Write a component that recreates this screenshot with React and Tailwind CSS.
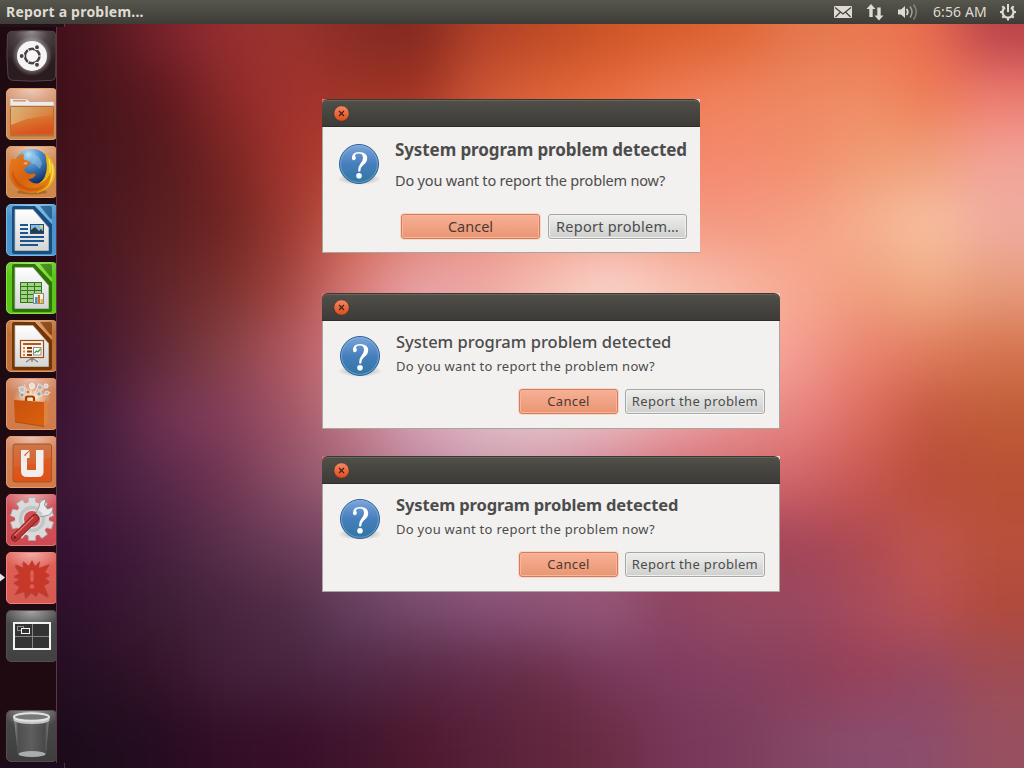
import React from "react";

const WALL = [
  "3a0c18 4e161e 7a222c 962e30 9a342c 882c26 82281f b04028 bc4824 cc5426 d85c2c de6434 e4764c e8784e ea6c50 b84248",
  "3a0c18 48141c 5c181e 8a2828 a2322e a03426 a03222 cc5634 de6436 ea6c3e f07c54 f0845e ee8862 f08c66 ee7c54 ee7c70",
  "3c1018 48161e 541a1e 762422 a2342c b84034 cc5040 de6448 e86c50 f07a5a f4866a f48a70 f28e6c f09c74 f0a07c f2a498",
  "3c1020 4a1820 5a1e20 6e2422 9a3830 d0604c e08070 ea9080 f09c88 f4a090 f49a84 f49880 f5a084 f6b090 f8c2a2 f0aca0",
  "3a1022 481826 60242a 7a302c a44440 d87c78 e8a4a8 eea8a4 f6c0b6 fad8ce f8c6b8 f8b8a4 f7a890 f0a07e f0ac84 e89c7c",
  "38102a 44182e 622a38 844044 b05860 d88084 e49ca0 eca8a8 f4b8b0 f6c0b4 f6bcb0 f8b4a8 f49c90 ea8470 e07c5c d47450",
  "361030 441a3a 703250 843e5c a05464 c47c88 d8a4b8 e0bcc8 e6c8ce ecbcc2 f0a8a8 ea9090 e88480 dc6c60 c45840 c05c38",
  "361230 441c3c 58284a 703450 8c5068 a4687c b88098 c894a8 cc90a0 cc8090 cc6c78 d06c70 d06468 c85650 b84c38 b85034",
  "30102e 3c1436 46203e 5a304c 6c3c58 7a4864 905c7c 9c6480 a05c78 a04c64 9c4458 a04456 a44458 ac4a50 c0564e b8503c",
  "280e28 341230 3a1e34 48243e 502c44 644060 784a6c 845078 8c5478 96587a 8c4464 964a62 984860 a84c5c b85054 b04a3c",
  "200c20 2a1024 341428 44203a 48243e 502846 582844 602c48 6a2e48 78385a 803c5e 844060 8c3e5a 984058 944860 a04c54",
  "1a0a1a 1e0c1c 260c20 320e26 380e28 40142c 4c182e 58203a 60263c 6a2c44 783658 7c3c5c 844664 8a4c6c 8c4c6c 98505f",
].map((r) => r.split(" "));

function Wallpaper() {
  const cells = [];
  for (let r = -2; r < 14; r++) {
    for (let c = -2; c < 18; c++) {
      const row = WALL[Math.min(11, Math.max(0, r))];
      const fill = "#" + row[Math.min(15, Math.max(0, c))];
      cells.push(<rect key={r + "_" + c} x={c * 64} y={r * 64} width="65" height="65" fill={fill} />);
    }
  }
  return (
    <svg className="absolute inset-0 h-full w-full" viewBox="0 0 1024 768">
      <defs>
        <filter id="soft" filterUnits="userSpaceOnUse" x="-128" y="-128" width="1280" height="1024" colorInterpolationFilters="sRGB">
          <feGaussianBlur stdDeviation="27" />
        </filter>
      </defs>
      <g filter="url(#soft)">{cells}</g>
    </svg>
  );
}

function Tile({ id, top, bottom, edge, children }) {
  return (
    <svg className="block h-[52px] w-[50px] shrink-0" viewBox="0 0 50 52">
      <defs>
        <linearGradient id={id} x1="0" y1="0" x2="0" y2="1">
          <stop offset="0" stopColor={top} />
          <stop offset="1" stopColor={bottom} />
        </linearGradient>
        <radialGradient id={id + "g"} cx="0.5" cy="0" r="0.6">
          <stop offset="0" stopColor="#fff" stopOpacity="0.5" />
          <stop offset="1" stopColor="#fff" stopOpacity="0" />
        </radialGradient>
      </defs>
      <rect x="0.5" y="0.5" width="50.5" height="51" rx="4.5" fill={`url(#${id})`} stroke={edge} />
      <rect x="1" y="1" width="49" height="30" rx="4" fill={`url(#${id}g)`} />
      {children}
    </svg>
  );
}

function DashIcon() {
  return (
    <svg className="block h-[52px] w-[50px] shrink-0" viewBox="0 0 50 52">
      <defs>
        <radialGradient id="dash" cx="0.5" cy="0.02" r="0.75">
          <stop offset="0" stopColor="#938c8e" />
          <stop offset="0.45" stopColor="#4b4143" />
          <stop offset="1" stopColor="#2b1c20" />
        </radialGradient>
        <radialGradient id="dashglow">
          <stop offset="0.55" stopColor="#fff" stopOpacity="0.5" />
          <stop offset="1" stopColor="#fff" stopOpacity="0" />
        </radialGradient>
      </defs>
      <path d="M5 1.5Q26 -0.5 47 1.5Q49.5 2 49.5 5Q50.5 26 49.5 46Q49 50 46 50.3Q26 52 6 50.3Q2.500 50 2 46Q0 26 1.500 5Q2 2 5 1.500Z" fill="url(#dash)" stroke="#514447" />
      <circle cx="26" cy="26" r="20" fill="url(#dashglow)" />
      <circle cx="26" cy="26" r="15" fill="#f6f4f4" />
      <circle cx="26.200" cy="26" r="7.300" fill="none" stroke="#4a3f41" strokeWidth="2.500" />
      <g fill="#4a3f41" stroke="#f6f4f4" strokeWidth="1.100">
        <circle cx="15.700" cy="26" r="2.500" />
        <circle cx="31" cy="17.200" r="2.500" />
        <circle cx="31" cy="34.800" r="2.500" />
      </g>
      <g stroke="#f6f4f4" strokeWidth="1">
        <path d="M32 26h4M23.500 22l-3-5M23.500 30l-3 5" />
      </g>
    </svg>
  );
}

function FilesIcon() {
  return (
    <Tile id="files" top="#d99877" bottom="#cf8a4c" edge="#e2a06a">
      <defs>
        <linearGradient id="fold" x1="0" y1="0" x2="0.35" y2="1">
          <stop offset="0" stopColor="#c9925a" />
          <stop offset="0.5" stopColor="#d97a34" />
          <stop offset="1" stopColor="#d9541c" />
        </linearGradient>
        <linearGradient id="foldgloss" x1="0" y1="0" x2="1" y2="0">
          <stop offset="0" stopColor="#e3cc90" stopOpacity="0.6" />
          <stop offset="1" stopColor="#e3a870" stopOpacity="0.15" />
        </linearGradient>
      </defs>
      <path d="M4 18V10.500H20L24 13.500H48V18Z" fill="#eeebe8" stroke="#b9a79a" strokeWidth="0.800" />
      <path d="M7 12.700h13" stroke="#d99a72" strokeWidth="1.800" />
      <rect x="4.500" y="18.500" width="43" height="28" rx="1" fill="url(#fold)" stroke="#b96a35" />
      <path d="M5 19h42v8Q22 29 5 37Z" fill="url(#foldgloss)" />
      <path d="M4 47.800h44" stroke="#8f4a20" strokeWidth="1" opacity="0.6" />
    </Tile>
  );
}

function FirefoxIcon() {
  return (
    <Tile id="ffx" top="#d59161" bottom="#cd8646" edge="#e2a064">
      <defs>
        <radialGradient id="globe" cx="0.4" cy="0.15" r="0.8">
          <stop offset="0" stopColor="#b9e2f4" />
          <stop offset="0.4" stopColor="#4c91cc" />
          <stop offset="1" stopColor="#12306e" />
        </radialGradient>
        <linearGradient id="foxy" x1="0" y1="0" x2="1" y2="1">
          <stop offset="0" stopColor="#e77d1e" />
          <stop offset="0.5" stopColor="#d9620f" />
          <stop offset="1" stopColor="#e98a12" />
        </linearGradient>
      </defs>
      <ellipse cx="26" cy="46" rx="15" ry="2.500" fill="#7a4010" opacity="0.45" />
      <circle cx="26" cy="21" r="18" fill="url(#globe)" />
      <path d="M27 8l6 3 3 6 -2 6 -4 -4 -5 -2 2 -4z" fill="#a6d2ec" opacity="0.4" />
      <path d="M39 7Q49 14 49 28Q47 43 31 47L27 40Q38 37 40 27Q42 20 39 7Z" fill="#e9b913" />
      <path d="M43 13Q46 24 42 33M46 18Q49 29 43 37" stroke="#f8e36a" strokeWidth="1.200" fill="none" />
      <path d="M6 12Q8 14 10 13Q13 9 18 8Q17 11 18 14Q22 14 25 17Q23 20 20 20.500L18 24Q20 27 24 28Q28 27 30 28.500Q27 33 22 33Q27 39 35 37Q42 34 44 26Q46 37 38 43Q29 49 18 46Q7 42 3.500 31Q2 21 6 12Z" fill="url(#foxy)" />
      <path d="M7 24Q9 36 20 41Q31 44 40 38Q34 47 22 45Q8 41 6 28Z" fill="#b5440b" opacity="0.45" />
      <path d="M17 17l5 -1 -2 3z" fill="#fff" opacity="0.5" />
    </Tile>
  );
}

function DocTile({ id, light, mid, dark, children }) {
  return (
    <Tile id={id} top={mid} bottom={mid} edge={light}>
      <defs>
        <linearGradient id={id + "p"} x1="0" y1="0" x2="0" y2="1">
          <stop offset="0" stopColor="#ffffff" />
          <stop offset="1" stopColor="#d5d5d5" />
        </linearGradient>
      </defs>
      <path d="M8 2H29L46 20V48a2 2 0 0 1 -2 2H8a2 2 0 0 1 -2 -2V4a2 2 0 0 1 2 -2Z" fill={dark} />
      <path d="M34 2H44a2 2 0 0 1 2 2V14.500Q44 14.500 43 13Z" fill={dark} opacity="0.7" />
      <path d="M29 2H32L46 17V20Z" fill={light} opacity="0.8" />
      <path d="M9 5.500H27L42.500 23.500V46.500H9Z" fill={`url(#${id}p)`} stroke="#b9bcbb" strokeWidth="0.800" />
      {children}
    </Tile>
  );
}

function WriterIcon() {
  return (
    <DocTile id="wri" light="#79b8e6" mid="#4a94cd" dark="#174e7e">
      <path d="M14 21h8M14 25h8M14 29h8M14 33h24M14 37h24M14 41h18" stroke="#1b568c" strokeWidth="2" />
      <rect x="24.500" y="20.500" width="13" height="9" fill="#83bde6" stroke="#1c4f7c" />
      <path d="M25 29v-3l4 -3 4 4 2 -2 2.500 3V29Z" fill="#2c3b42" />
      <circle cx="35.500" cy="22.500" r="1.500" fill="#ecd24b" />
    </DocTile>
  );
}

function CalcIcon() {
  return (
    <DocTile id="cal" light="#8be03e" mid="#5cc51b" dark="#2e7404">
      <rect x="14" y="20" width="22" height="21" fill="#2f7d0d" />
      <g fill="#a5cf8f">
        {[21, 25, 29, 33, 37].map((y) =>
          [15, 22, 29].map((x) => <rect key={x + "-" + y} x={x} y={y} width="6" height="3" />)
        )}
      </g>
      <rect x="27.500" y="31.500" width="10" height="10" fill="#f2f2f2" stroke="#8b8b8b" />
      <path d="M29 41v-6h2.500v6z" fill="#3b93d4" />
      <path d="M31.800 41v-8h2.200v8z" fill="#e06b16" />
      <path d="M34.500 41v-4h2.500v4z" fill="#e8be1b" />
    </DocTile>
  );
}

function ImpressIcon() {
  return (
    <DocTile id="imp" light="#df9a63" mid="#be7038" dark="#743503">
      <path d="M26 38v4M26 38l-6 4M26 38l6 4" stroke="#858585" strokeWidth="1.500" />
      <rect x="14.500" y="20.500" width="23" height="17" fill="#f8f3ef" stroke="#9a4c10" strokeWidth="1.200" />
      <path d="M17 24h18" stroke="#b35a18" strokeWidth="2" />
      <path d="M17 28h2M17 31.500h2M17 35h2" stroke="#d88242" strokeWidth="2" />
      <path d="M21 28h5M21 31.500h5M21 35h5" stroke="#8a3c04" strokeWidth="2" />
      <rect x="27.500" y="27.500" width="7.500" height="7.500" fill="#fff" stroke="#8b8b8b" />
      <path d="M28.500 33l2 -2 1.500 1 2.500 -3" stroke="#3a9a20" strokeWidth="1.200" fill="none" />
    </DocTile>
  );
}

function SoftwareIcon() {
  return (
    <Tile id="sft" top="#d0835f" bottom="#d07a47" edge="#e39a6a">
      <defs>
        <linearGradient id="bag" x1="0" y1="0" x2="1" y2="1">
          <stop offset="0" stopColor="#c9500f" />
          <stop offset="1" stopColor="#d8620c" />
        </linearGradient>
        <radialGradient id="bagglow">
          <stop offset="0" stopColor="#fff3d5" />
          <stop offset="1" stopColor="#fff3d5" stopOpacity="0" />
        </radialGradient>
      </defs>
      <ellipse cx="26" cy="20" rx="19" ry="12" fill="url(#bagglow)" />
      <path d="M24 20L12 9M24 20L18 6M25 20V7M27 20L33 5M28 20L40 8M29 20L45 14" stroke="#fff" strokeWidth="1" opacity="0.5" />
      <g stroke="#fff" strokeWidth="0.600">
        <circle cx="16" cy="11.500" r="3" fill="#b9c4d0" />
        <circle cx="26" cy="8" r="2.700" fill="#e9dfda" />
        <circle cx="34" cy="9.500" r="2.700" fill="#b6b2b8" />
        <circle cx="40" cy="8" r="2.200" fill="#d8d0cc" />
        <circle cx="41" cy="15" r="2" fill="#aebbc9" />
        <circle cx="16" cy="17" r="2" fill="#6f9bb4" />
        <circle cx="22" cy="14" r="2" fill="#d8743c" />
        <circle cx="33" cy="16" r="2.200" fill="#92a2b5" />
      </g>
      <path d="M8 22L38 24V48.500L9 44Z" fill="url(#bag)" />
      <path d="M38 24L41 21 43 44 38 48.500Z" fill="#dd8240" />
      <path d="M20 23V20Q20 18.500 22 18.500H26Q28 18.500 28 20V23" stroke="#a53c00" strokeWidth="2.200" fill="none" />
      <path d="M9 44L38 48.500" stroke="#9c3c05" strokeWidth="1" opacity="0.6" />
    </Tile>
  );
}

function UbuntuOneIcon() {
  return (
    <Tile id="uone" top="#d98865" bottom="#d07b48" edge="#e59c70">
      <defs>
        <linearGradient id="uin" x1="0" y1="0" x2="0" y2="1">
          <stop offset="0" stopColor="#cd7648" />
          <stop offset="1" stopColor="#e0531a" />
        </linearGradient>
      </defs>
      <rect x="7" y="8" width="38.500" height="38" rx="2" fill="url(#uin)" stroke="#a85427" />
      <path d="M7.500 31Q28 30 45 21V45H7.500Z" fill="#e04e10" opacity="0.45" />
      <path d="M15 14H23V20L21 19.500V34H30V14H37.500V36Q37.500 41 32 41H21Q15 41 15 35Z" fill="#f2eeec" />
      <path d="M18.500 18.500L23 14.500V20H18.500Z" fill="#d9642c" />
      <path d="M19.500 19.500L23.500 15V22H21Z" fill="#f2eeec" />
    </Tile>
  );
}

function SettingsIcon() {
  const teeth = [0, 36, 72, 108, 144, 180, 216, 252, 288, 324];
  return (
    <Tile id="set" top="#d0565c" bottom="#cf4a52" edge="#e07a7e">
      <g fill="#dadada" stroke="#a9a9a9" strokeWidth="0.700">
        {teeth.map((a) => (
          <path key={a} d="M22 11L22.500 3.500H29.500L30 11Z" transform={`rotate(${a} 26 25)`} />
        ))}
        <circle cx="26" cy="25" r="17" stroke="none" />
      </g>
      <circle cx="26" cy="25" r="11.500" fill="none" stroke="#c4c4c4" strokeWidth="3.500" />
      <circle cx="26" cy="25" r="8" fill="#cf4f55" />
      <path d="M33 13Q33 6 40 5L38.500 11L41.500 15L47 13Q47 21 39 22L34 22.500L30 19Z" fill="#eaeaea" stroke="#8f8f8f" strokeWidth="0.900" />
      <path d="M35 18L28.500 25" stroke="#c9c9c9" strokeWidth="5" />
      <path d="M29 24L9 43.500" stroke="#82201f" strokeWidth="8" strokeLinecap="round" />
      <path d="M29 24L9 43.500" stroke="#bb3636" strokeWidth="6" strokeLinecap="round" />
      <path d="M27 23.500L9 41" stroke="#dc7470" strokeWidth="1.300" strokeLinecap="round" />
      <circle cx="9" cy="43.500" r="1.500" fill="#6e2020" />
    </Tile>
  );
}

function CrashIcon() {
  const burst =
    "M9 12L18 16L17 9L23 14L26 8L29 14L34 9L33 16L44 12L39 20L44 23L39 26L44 30L38 33L43 45L33 39L31 44L26 40L20 46L19 39L9 42L14 34L8 30L15 27L8 24L14 21Z";
  return (
    <Tile id="crs" top="#e06056" bottom="#d65a50" edge="#ec8278">
      <path d={burst} fill="#9c3a34" opacity="0.7" transform="translate(-0.8 1.200)" />
      <path d={burst} fill="#c83829" />
      <rect x="24" y="18" width="4" height="12" rx="1.200" fill="#df5f52" stroke="#b23125" strokeWidth="0.500" />
      <circle cx="26" cy="34.500" r="2.200" fill="#df5f52" />
    </Tile>
  );
}

function WorkspaceIcon() {
  return (
    <Tile id="wsp" top="#4c4c4c" bottom="#414141" edge="#505050">
      <rect x="8" y="13" width="36" height="26" fill="#333" stroke="#f2f2f2" strokeWidth="2" />
      <path d="M26.500 14v24M9 26.500h34" stroke="#868686" strokeWidth="1" />
      <rect x="11.500" y="16.500" width="6" height="4" fill="none" stroke="#8e8e8e" />
      <rect x="15.500" y="18.500" width="8" height="5" fill="#333" stroke="#f5f5f5" />
    </Tile>
  );
}

function TrashIcon() {
  return (
    <Tile id="trs" top="#4a4a4a" bottom="#3e3e3e" edge="#505050">
      <defs>
        <linearGradient id="can" x1="0" y1="0" x2="1" y2="0">
          <stop offset="0" stopColor="#a5a5a5" />
          <stop offset="0.12" stopColor="#505050" />
          <stop offset="0.5" stopColor="#636363" />
          <stop offset="0.88" stopColor="#4a4a4a" />
          <stop offset="1" stopColor="#8a8a8a" />
        </linearGradient>
      </defs>
      <path d="M8 9H43L40 45Q26 49.500 12 45Z" fill="url(#can)" opacity="0.85" />
      <ellipse cx="26" cy="44" rx="13.500" ry="3" fill="#a9adab" />
      <path d="M7.500 7V10.500Q12 14 26 14T43.500 10.500V7Z" fill="#c6c6c6" />
      <ellipse cx="25.500" cy="7" rx="17.500" ry="3.800" fill="#787878" stroke="#e2e2e2" strokeWidth="2" />
    </Tile>
  );
}

function Launcher() {
  return (
    <aside className="relative flex w-[65px] shrink-0 flex-col">
      <div className="h-[3px] border-r border-[#6b3540] bg-[#24101a]" />
      <div className="flex min-h-0 w-[57px] flex-1 flex-col gap-1.5 border-r border-[#5d3643] bg-[#200a11] pt-[3px] pl-1.5">
        <DashIcon />
        <FilesIcon />
        <FirefoxIcon />
        <WriterIcon />
        <CalcIcon />
        <ImpressIcon />
        <SoftwareIcon />
        <UbuntuOneIcon />
        <SettingsIcon />
        <CrashIcon />
        <WorkspaceIcon />
        <div className="mt-auto pb-[1px]">
          <TrashIcon />
        </div>
      </div>
      <div className="h-[5px] border-r border-[#4a3048] bg-[#1c0a1e]" />
      <svg className="absolute top-[549px] left-0 h-[9px] w-[5px]" viewBox="0 0 5 9">
        <path d="M0 0.500L5 4.500L0 8.500Z" fill="#e4e2e3" />
      </svg>
    </aside>
  );
}

function TopBar() {
  return (
    <header className="relative flex h-6 shrink-0 items-center bg-linear-to-b from-[#57564d] to-[#3d3c37] text-[#dfdbd2]">
      <h1 className="pl-1.5 text-[14px] leading-6 font-bold tracking-[0.22px] whitespace-nowrap">Report a problem...</h1>
      <div className="ml-auto flex items-center pr-[7px]">
        <svg className="h-6 w-5" viewBox="0 0 20 24">
          <rect x="1" y="6" width="18" height="12" rx="1" fill="#dfdbd2" />
          <path d="M2 7.500L10 14L18 7.500M2.500 17L7.500 12M17.500 17L12.500 12" stroke="#45443e" strokeWidth="1.300" fill="none" />
        </svg>
        <svg className="ml-3 h-6 w-5" viewBox="0 0 20 24">
          <path d="M6 4L10.500 9H7.700V17H4.300V9H1.500ZM14 20.500L9.500 15.500H12.300V7.500H15.700V15.500H18.500Z" fill="#dfdbd2" />
        </svg>
        <svg className="ml-3 h-6 w-5" viewBox="0 0 20 24">
          <path d="M1 9.500H4L8 6V18L4 14.500H1Z" fill="#dfdbd2" />
          <path d="M9.500 9Q12 12 9.500 15" stroke="#dfdbd2" strokeWidth="1.800" fill="none" />
          <path d="M13 6.500Q17 12 13 17.500" stroke="#a19f96" strokeWidth="1.500" fill="none" />
          <path d="M16.500 4.500Q22 12 16.500 19.500" stroke="#84827a" strokeWidth="1.500" fill="none" />
        </svg>
        <span className="ml-4 w-[54px] text-[14px] leading-6 tracking-[0.1px] whitespace-nowrap">6:56 AM</span>
        <svg className="ml-3 h-6 w-[18px]" viewBox="0 0 18 24">
          <path d="M6 7.500A5.500 5.500 0 1 0 12 7.500" stroke="#dfdbd2" strokeWidth="2.200" fill="none" />
          <path d="M9 4v8" stroke="#dfdbd2" strokeWidth="2" />
          <path d="M1 12h3M14 12h3M9 17v3.500M3.300 17.700l2 -2M14.700 17.700l-2 -2M3.300 6.300l2 2M14.700 6.300l-2 2" stroke="#dfdbd2" strokeWidth="2" />
        </svg>
      </div>
    </header>
  );
}

function QuestionIcon() {
  return (
    <svg className="block h-12 w-12 shrink-0" viewBox="0 0 48 48">
      <defs>
        <linearGradient id="q" x1="0" y1="0" x2="0" y2="1">
          <stop offset="0" stopColor="#7da5dc" />
          <stop offset="0.5" stopColor="#467fbb" />
          <stop offset="1" stopColor="#2f76a4" />
        </linearGradient>
        <radialGradient id="qs">
          <stop offset="0.4" stopColor="#000" stopOpacity="0.22" />
          <stop offset="1" stopColor="#000" stopOpacity="0" />
        </radialGradient>
      </defs>
      <ellipse cx="24" cy="39" rx="22" ry="6" fill="url(#qs)" />
      <circle cx="24" cy="24" r="19.500" fill="url(#q)" stroke="#2b6396" />
      <circle cx="24" cy="24" r="18.400" fill="none" stroke="#8fb6e2" strokeWidth="0.900" opacity="0.65" />
      <path d="M17 18.800Q16.500 12 24 12Q32.200 12 32.200 18.500Q32.200 22.300 28 25.300Q25.300 27.500 25.200 31.500H23.100Q22.800 27 25.300 23.800Q28 20.800 28 18Q28 13.600 23.800 13.600Q20.300 13.600 20 16Q21 17 20.800 18.300Q20.300 20.400 18.700 20.300Q17.200 20.200 17 18.800Z" fill="#fff" />
      <circle cx="24" cy="35.700" r="2.800" fill="#fff" />
    </svg>
  );
}

function Button({ primary, className, children }) {
  const tone = primary
    ? "border-[#d27c5c] bg-linear-to-b from-[#f7b095] to-[#e99672] text-[#4b3a33] shadow-[0_0_0_1px_#f6d8cb,inset_0_0_0_1px_#f8b59b]"
    : "border-[#a6a6a5] bg-linear-to-b from-[#eeeeed] to-[#cfcfce] text-[#4c4c4c] shadow-[0_1px_0_#fafafa,inset_0_0_0_1px_#f0f0ef]";
  return (
    <button className={`flex items-center justify-center rounded-[3px] border whitespace-nowrap ${tone} ${className}`}>
      {children}
    </button>
  );
}

function Dialog({ className, children }) {
  return (
    <section className={`absolute flex flex-col bg-linear-to-r from-[#d9696c] to-[#f8cfc8] ${className}`}>
      <div className="flex h-7 shrink-0 items-center rounded-t-[6px] border-t border-b border-t-[#3a3934] border-b-[#2e2d2a] bg-linear-to-b from-[#504f48] to-[#3c3b37] pl-[11px] shadow-[inset_0_1px_0_#66655c]">
        <svg className="h-[17px] w-[17px]" viewBox="0 0 17 17">
          <defs>
            <linearGradient id="cls" x1="0" y1="0" x2="0" y2="1">
              <stop offset="0" stopColor="#f58a65" />
              <stop offset="1" stopColor="#df4a17" />
            </linearGradient>
          </defs>
          <circle cx="8.500" cy="8.500" r="7.700" fill="url(#cls)" stroke="#33322e" strokeWidth="0.600" />
          <path d="M6 6L11 11M11 6L6 11" stroke="#3c2018" strokeWidth="1.100" />
        </svg>
      </div>
      <div className="flex flex-1 border-b border-l border-[#a9a49c] bg-[#f2f1f0] text-[#4c4c4c]">{children}</div>
    </section>
  );
}

function CompactDialog({ className, title }) {
  return (
    <Dialog className={`left-[322px] h-[136px] w-[458px] ${className}`}>
      <div className="flex flex-1 border-r border-[#a9a49c] pt-[11px] pr-3.5 pl-[13px]">
        <QuestionIcon />
        <div className="-mt-px ml-3 flex flex-1 flex-col">
          {title}
          <p className="mt-px text-[13px] leading-6 tracking-[0.28px] whitespace-nowrap">Do you want to report the problem now?</p>
          <div className="mt-[11px] flex justify-end gap-[7px]">
            <Button primary className="h-[25px] w-[99px] text-[13px] tracking-[0.35px]">Cancel</Button>
            <Button className="h-[25px] w-[140px] text-[13px] tracking-[0.35px]">Report the problem</Button>
          </div>
        </div>
      </div>
    </Dialog>
  );
}

export default function App() {
  return (
    <div className="relative flex h-[768px] w-[1024px] flex-col overflow-hidden bg-[#5c2440] font-['Noto_Sans',sans-serif]">
      <Wallpaper />
      <TopBar />
      <div className="flex min-h-0 flex-1">
        <Launcher />
      </div>

      <Dialog className="top-[99px] left-[322px] h-[154px] w-[378px]">
        <div className="flex flex-1 pt-[13px] pr-[13px] pl-3">
          <QuestionIcon />
          <div className="-mt-px ml-3 flex flex-1 flex-col">
            <h2 className="text-[17px] leading-[22px] font-bold tracking-[-0.1px] whitespace-nowrap">System program problem detected</h2>
            <p className="mt-2 text-[14.5px] leading-[22px] tracking-[-0.18px] whitespace-nowrap">Do you want to report the problem now?</p>
            <div className="mt-[23px] flex justify-end gap-2">
              <Button primary className="h-[25px] w-[139px] text-[14.5px]">Cancel</Button>
              <Button className="h-[25px] w-[139px] text-[14.5px] tracking-[0.25px]">Report problem…</Button>
            </div>
          </div>
        </div>
      </Dialog>

      <CompactDialog
        className="top-[293px]"
        title={<h2 className="text-[16.5px] leading-[22px] font-medium whitespace-nowrap">System program problem detected</h2>}
      />
      <CompactDialog
        className="top-[456px]"
        title={<h2 className="text-[16.5px] leading-[22px] font-bold tracking-[-0.13px] whitespace-nowrap">System program problem detected</h2>}
      />
    </div>
  );
}
